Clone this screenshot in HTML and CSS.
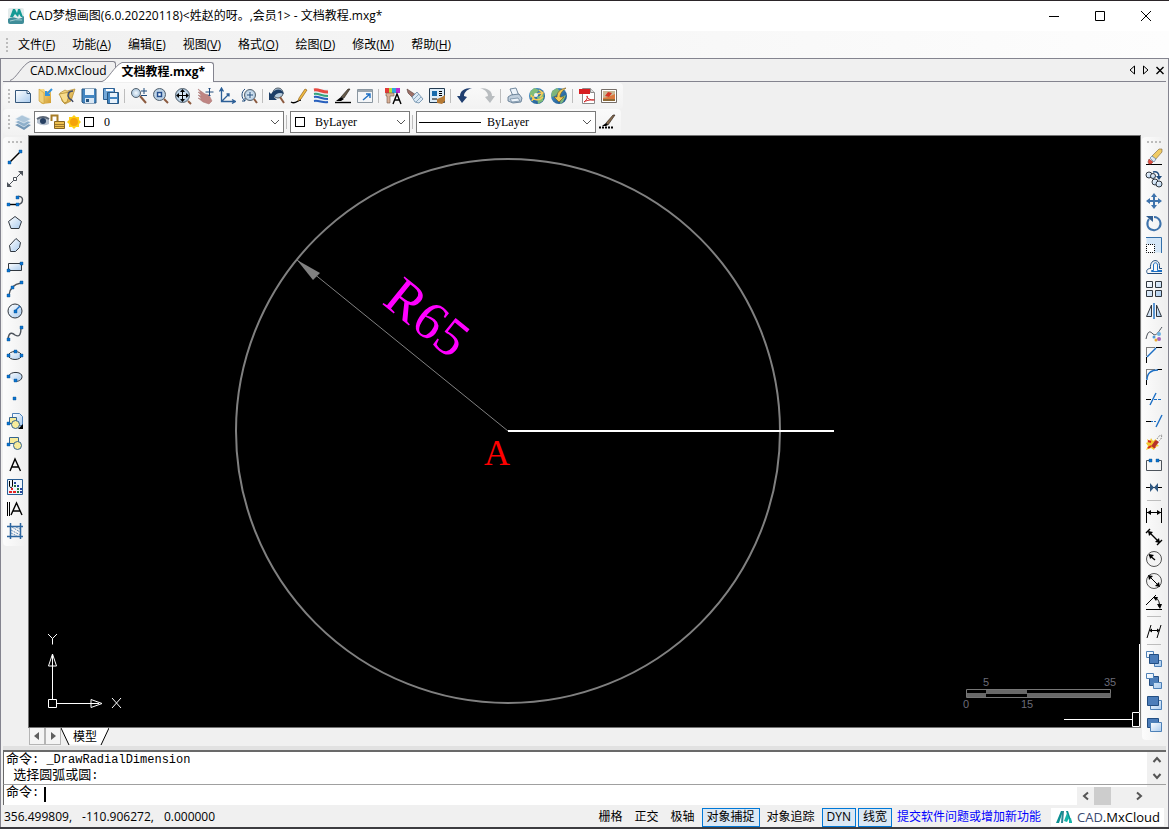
FILE: index.html
```html
<!DOCTYPE html>
<html lang="zh-CN">
<head>
<meta charset="utf-8">
<title>CAD梦想画图</title>
<link rel="stylesheet" href="styles.css">
</head>
<body>
<svg class="defs" aria-hidden="true">
  <defs>
    <linearGradient id="sky" x1="0" y1="0" x2="1" y2="1"><stop offset="0" stop-color="#fff"/><stop offset="1" stop-color="#a9cbee"/></linearGradient>
    <linearGradient id="gold" x1="0" y1="0" x2="1" y2="1"><stop offset="0" stop-color="#fbe59a"/><stop offset="1" stop-color="#d09a2c"/></linearGradient>
    <radialGradient id="lens"><stop offset="0" stop-color="#f4faff"/><stop offset="1" stop-color="#a8c4dc"/></radialGradient>
    <linearGradient id="globe" x1="0" y1="0" x2="1" y2="1"><stop offset="0" stop-color="#4f9ad0"/><stop offset="1" stop-color="#174f86"/></linearGradient>
  </defs>
</svg>
<div class="window">
  <header class="titlebar">
    <svg class="ic" viewBox="0 0 18 18"><rect x="1" y="1" width="16" height="16" rx="2" fill="#e4ecec"/><path d="m3 10 3-8h2l2 4 1-4h2l3 8h-2l-2-3-1 3-3-3-2 3z" fill="#149a94"/><path d="M1 12q4-3 8-1t8-2v6q0 2-2 2H3q-2 0-2-2z" fill="#3f8d99"/><path d="M3 14q5-2 12-1" fill="none" stroke="#a5cdd1"/></svg>
    <h1>CAD梦想画图(6.0.20220118)&lt;姓赵的呀。,会员1&gt; - 文档教程.mxg*</h1>
    <button aria-label="最小化"><svg viewBox="0 0 12 12"><path d="M1 6.500h10" class="k"/></svg></button>
    <button aria-label="最大化"><svg viewBox="0 0 12 12"><path d="M1.500 1.500h9v9h-9z" class="k"/></svg></button>
    <button aria-label="关闭"><svg viewBox="0 0 12 12"><path d="m1 1 10 10M11 1 1 11" class="k"/></svg></button>
  </header>

  <nav class="menu"><i class="grip"></i>
    <button>文件(<u>F</u>)</button><button>功能(<u>A</u>)</button><button>编辑(<u>E</u>)</button><button>视图(<u>V</u>)</button><button>格式(<u>O</u>)</button><button>绘图(<u>D</u>)</button><button>修改(<u>M</u>)</button><button>帮助(<u>H</u>)</button>
  </nav>

  <div class="frame">
    <div class="tabs">
      <button class="tab"><svg viewBox="0 0 20 20"><path d="M0 19.500C6 18 12 4 20 .5"/></svg><span>CAD.MxCloud</span></button>
      <button class="tab active"><svg viewBox="0 0 20 20"><path d="M0 19.500C6 18 12 4 20 .5V20H0z" stroke="none"/><path d="M0 19.500C6 18 12 4 20 .5" fill="none"/></svg><span>文档教程.mxg*</span></button>
      <div class="tab-nav">
        <button aria-label="上一个"><svg viewBox="0 0 12 12"><path d="M8.500 2v8L4 6z" class="k"/></svg></button>
        <button aria-label="下一个"><svg viewBox="0 0 12 12"><path d="M3.500 2v8L8 6z" class="k"/></svg></button>
        <button aria-label="关闭标签"><svg viewBox="0 0 12 12"><path d="m2.500 3 7 7m0-7-7 7" class="k w2"/></svg></button>
      </div>
    </div>

    <div class="bar"><i class="grip"></i>
      <button aria-label="新建"><svg class="ic" viewBox="0 0 18 18"><path d="M1.500 3.500h12l3 3v9h-15z" fill="url(#sky)" stroke="#35577b"/><path d="M13 3.500v3h3" fill="#fff" stroke="#35577b"/></svg></button>
      <button aria-label="打开"><svg class="ic" viewBox="0 0 18 18"><path d="M3 2h5l1 2h6v12l-9 1-3-3z" fill="url(#gold)"/><path d="m3 2 5 4v11l-5-3z" fill="#f0d27c" stroke="#c89b36" stroke-width=".6"/><path d="m16 2-6 6m0-4v4h4" fill="none" stroke="#3494df" stroke-width="2"/></svg></button>
      <button aria-label="打开网络文件"><svg class="ic" viewBox="0 0 18 18"><path d="m2 6 5-3 2 1 8-2-4 12-6 3-3-3z" fill="url(#gold)" stroke="#b08a30" stroke-width=".7"/><path d="m1 7 11-2-3 10-3 1z" fill="#f7dc8b" stroke="#a98228" stroke-width=".7"/><path d="M15 4c-5 0-6 4-4 7 1 2 3 1 4 4" fill="none" stroke="#46506a" stroke-width="1.500"/></svg></button>
      <button aria-label="保存"><svg class="ic" viewBox="0 0 18 18"><path d="M2 2h14v14H3l-1-1z" fill="#4386c2" stroke="#285681"/><path d="M5 2h9v6H5z" fill="#edf5fc"/><path d="M5 11h9v5H5z" fill="#d9e7f4"/><path d="M6 12h3v3H6z" fill="#285681"/></svg></button>
      <button aria-label="另存为"><svg class="ic" viewBox="0 0 18 18"><path d="M1.500 1.500h11v11h-11z" fill="#74a8d8" stroke="#2c6095"/><path d="M4 2h7v2H4z" fill="#fff"/><path d="M5.500 5.500h11v11h-11z" fill="#4386c2" stroke="#285681"/><path d="M8 6h7v4H8zM8 12h7v4H8z" fill="#e8f2fb"/></svg></button>
      <hr>
      <button aria-label="实时缩放"><svg class="ic" viewBox="0 0 18 18"><circle cx="6" cy="6" r="4.500" class="lens"/><path d="m10 9 6 7" class="handle"/><path d="M14 1v6m-3-3h6m-6 4.500h6" class="navy"/></svg></button>
      <button aria-label="窗口缩放"><svg class="ic" viewBox="0 0 18 18"><circle cx="7.500" cy="7.500" r="6" class="lens"/><path d="m12 12 4 4" class="handle"/><path d="M5.500 5.500h4v4h-4z" fill="none" stroke="#214c8d" stroke-width="1.500"/></svg></button>
      <button aria-label="范围缩放"><svg class="ic" viewBox="0 0 18 18"><circle cx="8.500" cy="8.500" r="7" class="lens"/><path d="m14 14 3 3" class="handle"/><path d="M8.500 3v11M3 8.500h11" class="k"/><path d="m8.500 2 2.500 3H6zm0 13L6 12h5zM2 8.500 5 6v5zm13 0L12 11V6z"/></svg></button>
      <button aria-label="平移"><svg class="ic" viewBox="0 0 18 18"><path d="m2 2 7 5 4 1 3 6-3 3-6-2-5-4 4 1-4-4 4 1-4-4 3 1z" fill="#bf8583" stroke="#a87573" stroke-width=".5"/><path d="M13.500 1v8m-4-4h8m-5-3 1-1 1 1m-2 6 1 1 1-1" class="navy"/></svg></button>
      <button aria-label="坐标系"><svg class="ic" viewBox="0 0 18 18"><path d="M3.500 2v12.500H17M4 14l7-7M1.500 4.500 3.500 1l2 3.500M14 12.500l3.500 2-3.500 2M8.500 7H11v2.500" fill="none" stroke="#2c5f97" stroke-width="1.300"/></svg></button>
      <button aria-label="缩放全部"><svg class="ic" viewBox="0 0 18 18"><circle cx="10" cy="8" r="5.500" class="lens"/><path d="M10 5v6M7 8h6M5 2C1 5 1 11 5 14m-3 0h3v-3" class="navy"/><path d="m14 12 3 4" class="handle"/></svg></button>
      <hr>
      <button aria-label="上一视图"><svg class="ic" viewBox="0 0 18 18"><circle cx="10" cy="6" r="5" fill="#b6cbdc" stroke="#4c5965"/><path d="m12 10 4 6" class="handle"/><path d="M1 5v8h8L6 10c2-4 6-5 10-3C14 1 7 1 3 7z" fill="#1d3e67"/></svg></button>
      <button aria-label="草图"><svg class="ic" viewBox="0 0 18 18"><path d="M1 15c5 3 6-2 10-2" class="k w2"/><path d="m9 11 6-9 2 1-6 9-3 2z" fill="#f2bd42" stroke="#926119" stroke-width=".7"/></svg></button>
      <button aria-label="图层颜色"><svg class="ic" viewBox="0 0 18 18"><path d="M2 2h14v14H2z" fill="#e9f0f4"/><path d="M2 3c5-1 7 2 14 2" stroke="#e64942" fill="none" stroke-width="3"/><path d="M2 7c5-1 7 2 14 2" stroke="#34a37c" fill="none" stroke-width="2"/><path d="M2 10c5-1 7 2 14 2M2 14c5-1 8 2 14 1" stroke="#285fbd" fill="none" stroke-width="2"/></svg></button>
      <button aria-label="画刷"><svg class="ic" viewBox="0 0 18 18"><path d="M1 15.500h16" class="k w2"/><path d="m7 10 7-8h2l-6 9z" fill="#675b4a" stroke="#1e1a16" stroke-width=".6"/><path d="m2 14 5-4 3 2-3 2z"/></svg></button>
      <button aria-label="选择视口"><svg class="ic" viewBox="0 0 18 18"><path d="M1.500 2.500h15v13h-15z" fill="#f4f6f8" stroke="#8a96a0"/><path d="M2 4h14" stroke="#9aa5ae" stroke-width="2"/><path d="m7 13 7-6m-4 0h4v4" class="b w2"/></svg></button>
      <hr>
      <button aria-label="选择颜色"><svg class="ic" viewBox="0 0 18 18"><path d="M1 1h4v5H1z" fill="#e53935"/><path d="M5 1h3v5H5z" fill="#b7de3b"/><path d="M8 1h4v5H8z" fill="#31a6db"/><path d="M12 1h4v5h-4z" fill="#b72ed0"/><path d="M2 6h8v3H6v7H3V9H2z" fill="#dab298" stroke="#745548" stroke-width=".6"/><path d="m9 17 4-10 4 10m-6-4h4" class="k w2"/></svg></button>
      <button aria-label="特性匹配"><svg class="ic" viewBox="0 0 18 18"><path d="m1 2 9 6-3 3-5-5z" fill="#9e7169" stroke="#553c38" stroke-width=".6"/><path d="m6 10 5-5 6 7-4 4-4-1z" fill="#dbe9f5" stroke="#557a9b" stroke-width=".7"/><path d="m8 12 5-5m-3 8 5-5" stroke="#8aa8bf"/></svg></button>
      <button aria-label="特性"><svg class="ic" viewBox="0 0 18 18"><path d="M1.500 1.500h15v14h-15z" fill="#ddecf8" stroke="#243c52"/><path d="M4 4h5v5H4z" fill="#176aac"/><path d="M11 4.500h3m-3 2h3m-3 2h3M4 12h5" class="k"/><path d="m9 12 5-2 3-2v6l-3 3-5-1z" fill="#b67a35"/></svg></button>
      <hr>
      <button aria-label="撤销"><svg class="ic" viewBox="0 0 18 18"><path d="M16 1C8 1 4 4 4 9H1l5 7 5-6-3-1c0-3 2-6 8-8z" fill="#203f70"/></svg></button>
      <button aria-label="重做"><svg class="ic" viewBox="0 0 18 18"><path d="M2 1c8 0 12 3 12 8h3l-5 7-5-6 3-1c0-3-2-6-8-8z" fill="#b9bdc0"/></svg></button>
      <hr>
      <button aria-label="打印"><svg class="ic" viewBox="0 0 18 18"><path d="m4 2 6-1 3 8H7z" fill="#edf4fb" stroke="#536d87" stroke-width=".8"/><path d="m2 10 3-2 8-1 3 4-1 4-8 1-5-2z" fill="#c0cfdd" stroke="#536d87" stroke-width=".8"/><path d="m4 12 8-1 2 3-8 1z" fill="#edf4fb" stroke="#718aa1" stroke-width=".8"/></svg></button>
      <button aria-label="网络"><svg class="ic" viewBox="0 0 18 18"><circle cx="9" cy="9" r="8" fill="url(#globe)"/><path d="m2 5 4-4 5 2-3 4-6 4z" fill="#80bd79"/><path d="m9 10 7-3-1 7-5 3z" fill="#80bd79"/><path d="M3 8c3 6 8 6 12 2M4 14c1-6 5-8 11-8m-4-3 4 3-3 4" fill="none" stroke="#f5cc57" stroke-width="1.500"/><circle cx="8" cy="8" r="2" fill="#edf4fb"/></svg></button>
      <button aria-label="发布"><svg class="ic" viewBox="0 0 18 18"><circle cx="9" cy="9" r="8" fill="url(#globe)"/><path d="m2 4 5-3 3 3-5 5-4 1zM11 10l5-2-3 7-3 2z" fill="#7eb67c"/><path d="M16 1C10 2 7 5 7 10H4l5 5 5-5h-4c0-3 2-6 6-9z" fill="#f5cc57" stroke="#6f541a" stroke-width=".6"/></svg></button>
      <hr>
      <button aria-label="输出PDF"><svg class="ic" viewBox="0 0 18 18"><path d="M4.500 1.500h8l4 4v11h-12z" fill="#fff" stroke="#8c8a8a"/><path d="M12.500 1.500v4h4" fill="#ddd" stroke="#8c8a8a"/><path d="M1 2h11v5H1z" fill="#d71d20"/><path d="M6 15c4-3 4-6 3-6s1 4 6 4-5-1-9 2" fill="none" stroke="#cf2929"/></svg></button>
      <button aria-label="输出图片"><svg class="ic" viewBox="0 0 18 18"><path d="M1.500 2.500h15v13h-15z" fill="#fff" stroke="#766e68"/><path d="M3 4h12v10H3z" fill="#db793d"/><path d="M3 4h12v3l-7 3-5 1z" fill="#c9b896"/><path d="m8 5 4 1-3 4-4-1z" fill="#d73525"/><path d="M3 12h12v2H3z" fill="#8b6a38"/></svg></button>
    </div>

    <div class="bar props"><i class="grip"></i>
      <button aria-label="图层"><svg class="ic" viewBox="0 0 18 18"><path d="m1 12 7-3 9 3-7 5z" fill="#7397b6"/><path d="m1 9 7-3 9 3-7 5z" fill="#8fb0cb" stroke="#f0f5fa" stroke-width=".6"/><path d="m1 6 7-4 9 4-7 4z" fill="#adc6da" stroke="#f0f5fa" stroke-width=".6"/></svg></button>
      <div class="combo layer">
        <svg viewBox="0 0 46 16" class="flags"><path d="M1 5q6-4 12 0v5q-6 3-12-1z" fill="#b5c0ce"/><circle cx="7" cy="7" r="3" fill="#263f62"/><path d="M1 5q6-4 12 0" fill="none" stroke="#5b6676" stroke-width="2"/><path d="M15.500 7V1.500h6V8" fill="none" stroke="#a77c27" stroke-width="2"/><path d="M18.500 7.500h10v7h-10z" fill="#edbf4e" stroke="#866523"/><path d="M19 10.500h9m-9 2h9" stroke="#9c762b"/><path d="m38 1 2 2h3v3l2 2-2 2v3h-3l-2 2-2-2h-3v-3l-2-2 2-2V3h3z" fill="#ffcf13"/><circle cx="38" cy="8" r="4" fill="#f5a30b"/></svg>
        <i class="swatch"></i>
        <select aria-label="当前图层"><option>0</option></select><svg class="chev" viewBox="0 0 10 10"><path d="m1 3 4 4 4-4"/></svg>
      </div><hr>
      <div class="combo color"><i class="swatch"></i><select aria-label="颜色"><option>ByLayer</option></select><svg class="chev" viewBox="0 0 10 10"><path d="m1 3 4 4 4-4"/></svg></div><hr>
      <div class="combo line"><i class="sample"></i><select aria-label="线型"><option>ByLayer</option></select><svg class="chev" viewBox="0 0 10 10"><path d="m1 3 4 4 4-4"/></svg></div>
      <button aria-label="线宽设置"><svg class="ic" viewBox="0 0 18 18"><path d="M1 14.500h15" stroke="#000" stroke-width="2" stroke-dasharray="2 1"/><path d="m8 10 7-8h2l-7 10z" fill="#866a4c" stroke="#211914" stroke-width=".6"/><path d="m4 13 4-3 2 2-2 1z"/></svg></button>
    </div>

    <main class="work">
      <aside class="tools"><div class="strip"><i class="grip across"></i>
        <button aria-label="直线"><svg class="ic" viewBox="0 0 18 18"><path d="M4 14 15 3" class="k w2"/><path d="M2 13h3v3H2zM13 2h3v3h-3z" class="p"/></svg></button>
        <button aria-label="构造线"><svg class="ic" viewBox="0 0 18 18"><path d="M2 16 16 2" class="g"/><path d="M1 12v5h5zM17 1v5l-5-5z" fill="#4d535b"/><path d="M7.500 7.500h3v3h-3z" fill="#fff" stroke="#4d535b"/></svg></button>
        <button aria-label="多段线"><svg class="ic" viewBox="0 0 18 18"><path d="M3 12.500h9" class="k w2"/><path d="M12 4.500c6-1 6 7 0 8" class="g w2"/><path d="M1 11h3v3H1zM10 11h3v3h-3zM10 4h3v3h-3z" class="p"/></svg></button>
        <button aria-label="正多边形"><svg class="ic" viewBox="0 0 18 18"><path d="m9 2.500 6.500 5-2.500 7H5L2.500 7.500z" class="shape"/></svg></button>
        <button aria-label="多边形"><svg class="ic" viewBox="0 0 18 18"><path d="m10 2.500 4.500 4-1 5-4 4h-5l-1-6z" class="shape"/></svg></button>
        <button aria-label="矩形"><svg class="ic" viewBox="0 0 18 18"><path d="M2.500 5.500h13v7h-13z" class="shape"/><path d="M1 11h3v3H1zM14 4h3v3h-3z" class="p"/></svg></button>
        <button aria-label="圆弧"><svg class="ic" viewBox="0 0 18 18"><path d="M3 15C4 8 8 4 15 3" class="g w2"/><path d="M1 14h3v3H1zM14 1h3v3h-3zM5 6h3v3H5z" class="p"/></svg></button>
        <button aria-label="圆"><svg class="ic" viewBox="0 0 18 18"><circle cx="9" cy="9" r="7" class="shape"/><path d="m9 9 5-5" class="b w2"/><path d="M8 8h3v3H8z" class="p"/></svg></button>
        <button aria-label="样条曲线"><svg class="ic" viewBox="0 0 18 18"><path d="M2 15c1-8 5-6 7-4 5 3 6-2 6-7" class="g w2"/><path d="M1 14h3v3H1zM14 2h3v3h-3z" class="p"/></svg></button>
        <button aria-label="椭圆"><svg class="ic" viewBox="0 0 18 18"><ellipse cx="9" cy="9.500" rx="6.500" ry="4" class="shape"/><path d="M1 8h3v3H1zM14 8h3v3h-3zM8 4h3v3H8z" class="p"/></svg></button>
        <button aria-label="椭圆弧"><svg class="ic" viewBox="0 0 18 18"><path d="M2.500 9C3 2 16 3 16 8.500c0 4-4 5-7 5z" fill="url(#sky)"/><path d="M2.500 9C3 3 16 3 16 8.500c0 4-4 5-7 5" fill="none" stroke="#30373f"/><path d="M1 7h3v3H1zM8 11h3v3H8z" class="p"/></svg></button>
        <button aria-label="点"><svg class="ic" viewBox="0 0 18 18"><path d="M7 7h3v3H7z" class="p"/></svg></button>
        <button aria-label="插入块"><svg class="ic" viewBox="0 0 18 18"><path d="M6.500 1.500h7l3 3v9h-10z" class="sheet"/><path d="M3.500 5.500h7v6h-7z" class="yel"/><circle cx="9.500" cy="12.500" r="4" class="yel"/><path d="M1 10h3v3H1z" class="p"/><path d="M17 12v5h-5z"/></svg></button>
        <button aria-label="创建块"><svg class="ic" viewBox="0 0 18 18"><path d="M3.500 3.500h9v6h-9z" class="yel"/><circle cx="11.500" cy="11.500" r="4" class="yel"/><path d="M1 9h3v3H1z" class="p"/></svg></button>
        <button aria-label="单行文字"><svg class="ic" viewBox="0 0 18 18"><path d="M4 15 9 3l5.500 12M5.500 11h7" class="k w2"/></svg></button>
        <button aria-label="图案填充"><svg class="ic" viewBox="0 0 18 18"><path d="M1.500 1.500h15v15h-15z" fill="#eef5fc" stroke="#285d93"/><path d="M3 13h3v2H3zM7 13h3v2H7zM5 10h2v2H5z" fill="#e52424"/><path d="M8 4h2v2H8zM11 7h2v2h-2zM14 10h2v2h-2zM14 13h2v2h-2z" fill="#23439c"/><path d="M8 7h2v2H8zM11 10h2v2h-2zM11 13h2v2h-2z" fill="#25733b"/><path d="M6.500 2v6c0 2-3 2-3 0V3" class="k"/></svg></button>
        <button aria-label="多行文字"><svg class="ic" viewBox="0 0 18 18"><path d="M1.500 2v14m2-14v14" class="k"/><path d="m5 15 5.500-12L16 15M7 11h7" class="k w2"/></svg></button>
        <button aria-label="边界"><svg class="ic" viewBox="0 0 18 18"><path d="M1 4.500h16M1 14.500h16M4.500 1v16M14.500 1v16" stroke="#2c659f" stroke-width="1.500"/><path d="m5 11 6 3M5 8l9 5M6 5l8 5M10 5l4 2" stroke="#5f88b3" stroke-dasharray="2 1"/></svg></button>
      </div></aside>

      <section class="viewport">
        <svg class="drawing" viewBox="29 136 1111 591" preserveAspectRatio="xMinYMin meet">
          <circle cx="508" cy="431" r="272" fill="none" stroke="#808080" stroke-width="2"/>
          <path d="M508 431 297 260" stroke="#808080"/>
          <path d="m297 260 23 13-7 7z" fill="#808080"/>
          <path d="M508 431h326" stroke="#fff" stroke-width="2"/>
          <text class="radius" transform="translate(381 303) rotate(39)">R65</text>
          <text class="point" x="484" y="465">A</text>
          <g fill="none" stroke="#fff"><path d="M48.500 699.500h8v8h-8zM52.500 699V654m0 0-4 12h8zm0 3v9m4.500 37.500h34m11 0-11-4v8zm-3 0h-8"/><path d="m48 634 4.500 4.500L57 634m-4.500 4.500v6M112 698l9 10m0-10-9 10"/></g>
          <path d="M1064 719.500h68m.5-7h7v14h-7zm7-.5V644" fill="none" stroke="#fff"/>
          <path d="M966.500 689.500h144v8h-144z" fill="none" stroke="#777"/>
          <path d="M967 693h19v4h-19zM986 690h41v4h-41zM1027 693h84v4h-84z" fill="#696969"/>
          <g class="scale"><text x="986" y="686">5</text><text x="1110" y="686">35</text><text x="966" y="708">0</text><text x="1027" y="708">15</text></g>
        </svg>
      </section>

      <aside class="tools right"><div class="strip"><i class="grip across"></i>
        <button aria-label="删除"><svg class="ic" viewBox="0 0 18 18"><path d="M1 16.500h16" class="k"/><path d="m4 11 4 3-2 2H4l-1-2z" fill="#e24b3e" stroke="#8b382f" stroke-width=".6"/><path d="m7 8 7-7h3v3l-7 8z" fill="#f0cb64" stroke="#79613c" stroke-width=".6"/><path d="m5 10 4 4 2-3-4-3z" fill="#dfe8f2" stroke="#456f98" stroke-width=".6"/></svg></button>
        <button aria-label="复制"><svg class="ic" viewBox="0 0 18 18"><circle cx="4" cy="5" r="3" class="shape"/><circle cx="8" cy="6" r="2.500" class="shape"/><circle cx="10" cy="12" r="3" class="shape"/><circle cx="14" cy="14" r="3" class="shape"/><path d="M8 2c4-1 6 1 6 5" class="navy w2"/><path d="M11 6h6l-3 4z" fill="#214c7d"/></svg></button>
        <button aria-label="移动"><svg class="ic" viewBox="0 0 18 18"><path d="M9 3v12M3 9h12" stroke="#3e73ac" stroke-width="2"/><path d="m9 1 3 4H6zm0 16-3-4h6zM1 9l4-3v6zm16 0-4 3V6z" fill="#3e73ac"/></svg></button>
        <button aria-label="旋转"><svg class="ic" viewBox="0 0 18 18"><path d="M4 5c-3 4-2 10 4 11 5 1 9-4 7-9-1-2-3-4-6-4" fill="none" stroke="#3e73ac" stroke-width="2"/><path d="M1 2h7v6z" fill="#315e91"/></svg></button>
        <button aria-label="缩放"><svg class="ic" viewBox="0 0 18 18"><path d="M1.500 1.500h15v15h-15z" fill="#d4e6f7"/><path d="M1 1.500h15.500V17" fill="none" stroke="#3470aa"/><path d="M1.500 8.500h8v8h-8z" fill="#fff"/><path d="M1.500 8.500h8v8h-8z" class="dot"/></svg></button>
        <button aria-label="偏移"><svg class="ic" viewBox="0 0 18 18"><path d="M17 15.500H2.500c-2-3 0-5 3-5-1-10 9-10 9-3v3H17" class="navy"/><path d="M17 13.500H6.500v-1h2V7c0-3 4-3 4 0v5.500H17" class="b"/></svg></button>
        <button aria-label="阵列"><svg class="ic" viewBox="0 0 18 18"><path d="M1.500 1.500h6v6h-6zM10.500 1.500h6v6h-6zM1.500 10.500h6v6h-6zM10.500 10.500h6v6h-6z" class="shape"/></svg></button>
        <button aria-label="镜像"><svg class="ic" viewBox="0 0 18 18"><path d="M1.500 14.500h5V3zM16.500 14.500h-5V3z" class="shape"/><path d="M9 1v16" class="b w2"/></svg></button>
        <button aria-label="编辑样条"><svg class="ic" viewBox="0 0 18 18"><path d="M1 15C3 6 5 7 8 10s6-3 9-7" class="g"/><circle cx="9" cy="13" r="1.500" fill="#4e9ad5"/><circle cx="14" cy="10" r="2" fill="#6eb4e4"/><circle cx="14" cy="15" r="2" fill="#a365bc"/><circle cx="11" cy="16" r="1.500" fill="#e8a832"/></svg></button>
        <button aria-label="倒角"><svg class="ic" viewBox="0 0 18 18"><path d="M1.500 17v-6M11 1.500h6" class="k"/><path d="M1.500 10V1.500H10" class="dot"/><path d="m2 11 9-9" class="b w2"/></svg></button>
        <button aria-label="圆角"><svg class="ic" viewBox="0 0 18 18"><path d="M1.500 17v-5M12 1.500h5" class="k"/><path d="M1.500 11V1.500H10" class="dot"/><path d="M2 12C2 5 6 2 13 2" class="b w2"/></svg></button>
        <button aria-label="修剪"><svg class="ic" viewBox="0 0 18 18"><path d="M1 9.500h5" class="k"/><path d="m5 15 6-12" class="b w2"/><path d="M9 9.500h8" class="b" stroke-dasharray="3 1"/></svg></button>
        <button aria-label="延伸"><svg class="ic" viewBox="0 0 18 18"><path d="M1 9.500h5" class="k"/><path d="M6 9.500h5" class="b" stroke-dasharray="2 1"/><path d="m11 15 6-12" class="b w2"/></svg></button>
        <button aria-label="分解"><svg class="ic" viewBox="0 0 18 18"><path d="m2 5 3 2 1-3 2 3 3-2v4l3 3-4 1-1 3-3-2-5 2 2-4-2-3 2-1z" fill="#f3c62d"/><path d="m3 7 3 1m5-1-2 3m-6 4 3-2m4 2-1-2" stroke="#d62c20" stroke-width="2"/><path d="m6 12 5-6 3 2-5 6z" fill="#b5322a"/><path d="m12 5 2-3 3-1-1 4-2 2" fill="none" stroke="#777" stroke-dasharray="1 1"/></svg></button>
        <button aria-label="打断"><svg class="ic" viewBox="0 0 18 18"><path d="M5 4.500H1.500v10h15v-10H13" class="g"/><path d="M4 3h3v3H4zM11 3h3v3h-3z" class="p"/></svg></button>
        <button aria-label="合并"><svg class="ic" viewBox="0 0 18 18"><path d="M1 9.500h16" class="k"/><path d="m5 5 4 4.500L5 14zm8 0L9 9.500l4 4.500z" fill="#315982"/></svg></button>
        <hr>
        <button aria-label="线性标注"><svg class="ic" viewBox="0 0 18 18"><path d="M1.500 2v15m15-15v15M2 6.500h14" class="k"/><path d="M2 6.500 6 4v5zm14 0L12 4v5z"/></svg></button>
        <button aria-label="对齐标注"><svg class="ic" viewBox="0 0 18 18"><path d="m1 5 4-4m7 16 5-5M4 4l10 10" class="k w2"/><path d="m3 3 5 1-4 4zm12 12-5-1 4-4z"/></svg></button>
        <button aria-label="半径标注"><svg class="ic" viewBox="0 0 18 18"><circle cx="9" cy="9" r="7.500" class="ring"/><path d="m4 5 6 5" class="k w2"/><path d="m4 4 5 1-4 4z"/></svg></button>
        <button aria-label="直径标注"><svg class="ic" viewBox="0 0 18 18"><circle cx="9" cy="9" r="7.500" class="ring"/><path d="m4 4 10 10" class="k"/><path d="m3 3 5 1-4 4zm12 12-5-1 4-4z"/></svg></button>
        <button aria-label="角度标注"><svg class="ic" viewBox="0 0 18 18"><path d="M1 15.500h16M1 11 11 1M10 3c4 3 5 6 4 10" class="k"/><path d="M8 3h5l-2 4zM12 10h5l-2 5z"/></svg></button>
        <hr>
        <button aria-label="编辑标注"><svg class="ic" viewBox="0 0 18 18"><path d="M2 16 6 3m6 13 4-13M5 8.500h9" class="k"/><path d="m4 8.500 3-2v4zm11 0-3-2v4z"/></svg></button>
        <hr>
        <button aria-label="前置"><svg class="ic" viewBox="0 0 18 18"><path d="M1.500 1.500h7v6h-7zM9.500 10.500h7v6h-7z" class="sheet"/><path d="M4.500 4.500h9v9h-9z" class="solid"/></svg></button>
        <button aria-label="后置"><svg class="ic" viewBox="0 0 18 18"><path d="M4.500 4.500h9v9h-9z" class="solid"/><path d="M1.500 1.500h7v5h-7zM8.500 10.500h8v6h-8z" class="sheet"/></svg></button>
        <button aria-label="置于对象之上"><svg class="ic" viewBox="0 0 18 18"><path d="M5.500 6.500h11v9h-11z" class="sheet"/><path d="M2.500 2.500h11v9h-11z" class="solid"/></svg></button>
        <button aria-label="置于对象之下"><svg class="ic" viewBox="0 0 18 18"><path d="M2.500 2.500h11v9h-11z" class="solid"/><path d="M5.500 6.500h11v9h-11z" class="sheet"/></svg></button>
      </div></aside>

      <div class="model">
        <button class="arrow" aria-label="向左"><svg viewBox="0 0 12 12"><path d="M8 2v8L3 6z"/></svg></button><button class="arrow" aria-label="向右"><svg viewBox="0 0 12 12"><path d="M4 2v8l5-4z"/></svg></button>
        <button class="sheet-tab"><svg viewBox="0 0 48 17" preserveAspectRatio="none"><path d="M0 0 8 16.500H40L48 0" stroke="none"/><path d="m0 0 8 17M48 0l-8 17"/></svg><span>模型</span></button>
      </div>
    </main>

    <section class="command">
      <div class="history">
        <div class="log"><p><b>命令</b>: _DrawRadialDimension</p><p>&nbsp;<b>选择圆弧或圆</b>:</p></div>
        <div class="vscroll"><button aria-label="向上滚动"><svg class="chev" viewBox="0 0 10 10"><path d="m1.500 7 3.500-4 3.500 4"/></svg></button><button aria-label="向下滚动"><svg class="chev" viewBox="0 0 10 10"><path d="m1.500 3 3.500 4 3.500-4"/></svg></button></div>
      </div>
      <div class="prompt">
        <label for="cmd"><b>命令</b>:</label><i class="caret"></i><input id="cmd" type="text" autocomplete="off">
        <div class="hscroll"><button aria-label="向左滚动"><svg class="chev" viewBox="0 0 10 10"><path d="m7 1.500-4 3.500 4 3.500"/></svg></button><i class="thumb"></i><button aria-label="向右滚动"><svg class="chev" viewBox="0 0 10 10"><path d="m3 1.500 4 3.500-4 3.500"/></svg></button></div>
      </div>
    </section>

    <footer class="status">
      <output><span>356.499809,</span><span>-110.906272,</span><span>0.000000</span></output>
      <button>栅格</button><button>正交</button><button>极轴</button><button class="on">对象捕捉</button><button>对象追踪</button><button class="on">DYN</button><button class="on">线宽</button>
      <a href="#feedback">提交软件问题或增加新功能</a>
      <div class="brand"><svg viewBox="0 0 18 16"><path d="M1 14 6 2h2l-4 12z" fill="#0c8f91"/><path d="M7 2h2l-1 12H6z" fill="#2c8690"/><path d="M11 2h2l4 12h-2z" fill="#0c8f91"/><path d="m9 12 3-8 2 5-2 4zM14 10l2-1 1 5h-3z" fill="#13b5aa"/></svg><span><em>CAD</em>.MxCloud</span></div>
    </footer>
  </div>
</div>
</body>
</html>
```
FILE: styles.css
```css
* { box-sizing: border-box; }
body { margin: 0; background: #f0f0f0; color: #000; font: 12px/16px "Open Sans", "Noto Sans CJK SC", sans-serif; }
button { margin: 0; padding: 0; border: 0; background: none; color: inherit; font: inherit; display: flex; align-items: center; justify-content: center; }
h1, p { margin: 0; font: inherit; }
svg { display: block; flex: none; }
.defs { position: absolute; width: 0; height: 0; }
.ic { width: 18px; height: 18px; }
.window { display: flex; flex-direction: column; min-height: 100vh; border-top: 1px solid #2b2529; border-bottom: 2px solid #3c3c40; }

.k, .b, .g, .navy { fill: none; stroke: #000; }
.b { stroke: #1c6fc4; }
.g { stroke: #4d535b; }
.navy { stroke: #214c7d; }
.w2 { stroke-width: 1.4; }
.p { fill: #0b74d1; stroke: #074b8c; stroke-width: 0.4; }
.shape { fill: url(#sky); stroke: #30373f; }
.lens { fill: url(#lens); stroke: #55626e; }
.handle { fill: none; stroke: #8b593e; stroke-width: 2; }
.ring { fill: #f4f4f4; stroke: #555; }
.dot { fill: none; stroke: #000; stroke-dasharray: 1 1; stroke-dashoffset: 0.5; }
.yel { fill: #f8ec9b; stroke: #35648d; }
.sheet { fill: url(#sky); stroke: #4e81b7; }
.solid { fill: #4c7db9; stroke: #234e82; }

.titlebar { display: flex; align-items: center; height: 30px; padding-left: 7px; background: #fff; }
.titlebar h1 { flex: 1; margin-left: 4px; }
.titlebar button { width: 46px; height: 30px; }
.titlebar button svg, .tab-nav svg, .arrow svg { width: 12px; height: 12px; }

.grip { flex: none; width: 2px; height: 14px; background: repeating-linear-gradient(#bcbcbc 0 2px, transparent 2px 4px); }
.grip.across { width: 14px; height: 2px; background: repeating-linear-gradient(90deg, #bcbcbc 0 2px, transparent 2px 4px); }
.menu { display: flex; align-items: center; gap: 17px; height: 27px; padding-left: 6px; background: linear-gradient(90deg, #f0f0f0, #fdfdfd); }
.menu .grip { margin-right: -7px; }

.frame { flex: 1; display: flex; flex-direction: column; border: solid #84848f; border-width: 1px 1px 0; }
.tabs { display: flex; align-items: flex-end; height: 23px; margin: 0 2px; padding-left: 7px; border-bottom: 1px solid #84848f; }
.tab { height: 20px; align-items: stretch; }
.tab svg { width: 20px; height: 20px; fill: #f0f0f0; stroke: #84848f; }
.tab span { border: solid #84848f; border-width: 1px 1px 0 0; border-radius: 0 3px 0 0; padding: 1px 8px 0 0; background: #f0f0f0; }
.tab.active { margin: 0 0 -1px -14px; z-index: 1; font-weight: bold; }
.tab.active svg { fill: #fff; }
.tab.active span { background: #fff; }
.tab-nav { display: flex; align-self: center; gap: 2px; margin-left: auto; }

.bar { display: flex; align-items: center; align-self: flex-start; height: 26px; margin: 1px 0 0 2px; padding: 0 3px 0 5px; border-radius: 4px; background: linear-gradient(#fafafa, #f2f2f2); }
.bar .grip { margin-right: 2px; }
.bar > button { width: 22px; height: 22px; }
.bar hr { width: 1px; height: 14px; margin: 0 3px 0 2px; border: 0; background: #bdbdbd; }
.bar.props { margin-top: 0; }
.combo { display: flex; align-items: center; gap: 4px; height: 22px; padding: 0 3px; border: 1px solid #7a7a7a; background: #fff; }
.combo select { flex: 1; min-width: 0; padding: 0 0 0 6px; border: 0; appearance: none; background: none; color: #000; font: 12px/16px "Liberation Serif", serif; }
.combo.layer { width: 250px; padding-left: 1px; }
.combo.color { width: 120px; }
.combo.line { width: 180px; padding-left: 2px; }
.combo.line select { padding-left: 2px; }
.flags { width: 46px; height: 16px; margin-right: -3px; }
.swatch { width: 10px; height: 10px; margin-left: 1px; border: 1px solid #000; }
.combo.layer select { padding-left: 6px; }
.sample { width: 62px; height: 1px; background: #000; }
.chev { width: 10px; height: 10px; fill: none; stroke: #555; }

.work { flex: 1; display: grid; grid-template: 1fr 18px / 27px 1fr 27px; }
.tools { grid-row: 1 / 3; padding: 2px 2px 0; }
.strip { display: flex; flex-direction: column; align-items: center; padding: 4px 0; border-radius: 4px; background: linear-gradient(90deg, #fcfcfc, #f0f0f0); }
.strip .grip { margin-bottom: 3px; }
.strip button { width: 22px; height: 22px; }
.strip hr { width: 14px; height: 1px; margin: 2px 0 3px; border: 0; background: #bdbdbd; }
.viewport { min-width: 0; border: 1px solid #747474; background: #000; overflow: hidden; display: flex; }
.drawing { flex: 1; width: 100%; }
.radius { fill: #f0f; font: 54px "Liberation Serif", serif; }
.point { fill: #f00; font: 36px "Liberation Serif", serif; }
.scale { fill: #6b6b78; font: 11px "Liberation Sans", sans-serif; text-anchor: middle; }
.right { grid-column: 3; grid-row: 1 / 3; padding: 2px 3px 0 1px; }
.model { grid-column: 2; grid-row: 2; display: flex; padding-left: 1px; }
.arrow { width: 16px; height: 17px; border: solid #b5b5b5; border-width: 0 1px 1px; background: #f4f4f4; }
.arrow path { fill: #5e5e5e; }
.sheet-tab { display: grid; width: 48px; height: 17px; }
.sheet-tab svg, .sheet-tab span { grid-area: 1 / 1; }
.sheet-tab svg { width: 48px; height: 17px; fill: #fff; stroke: #000; }

.command { border-top: 4px solid #e1e1e1; margin: 0 2px; font: 12px/16px "Liberation Mono", monospace; }
.command b { font: 13px/12px "Noto Sans CJK SC", sans-serif; }
.history { display: flex; justify-content: space-between; border: solid #696969; border-width: 2px 0 1px 1px; border-bottom-color: #a0a0a0; background: #fff; }
.log { padding-left: 2px; }
.log p { height: 16px; line-height: 12px; overflow: hidden; }
.vscroll { display: flex; flex-direction: column; width: 19px; background: #f0f0f0; }
.vscroll button { height: 16px; }
.command .chev { stroke-width: 2; }
.prompt { display: flex; height: 20px; padding-right: 19px; border-left: 1px solid #696969; background: linear-gradient(#f0f0f0, #f0f0f0) right / 19px 100% no-repeat #fff; }
.prompt label { padding-left: 2px; }
.caret { width: 2px; height: 15px; margin: 2px 0 0 5px; background: #000; }
.prompt input { flex: 1; min-width: 0; padding: 0 4px; border: 0; outline: 0; background: none; font: inherit; }
.hscroll { display: flex; width: 70px; height: 18px; margin-top: 2px; background: #f0f0f0; }
.hscroll button { width: 17px; }
.thumb { width: 17px; margin-right: auto; background: #cdcdcd; }

.status { display: flex; align-items: center; gap: 2px; height: 22px; padding: 2px 4px 0 3px; white-space: nowrap; }
.status output { display: flex; gap: 10px; margin-right: auto; }
.status button { height: 19px; padding: 0 4px; border: 1px solid transparent; line-height: 16px; }
.status .on { border-color: #0078d7; background: #dbe8f4; }
.status a { margin-left: 3px; color: #00f; text-decoration: none; }
.brand { display: flex; align-items: center; gap: 4px; height: 18px; margin-left: 8px; padding: 0 4px; background: #fff; font-size: 13px; }
.brand svg { width: 18px; height: 16px; }
.brand em { color: #3a4a72; font-style: normal; }
```
